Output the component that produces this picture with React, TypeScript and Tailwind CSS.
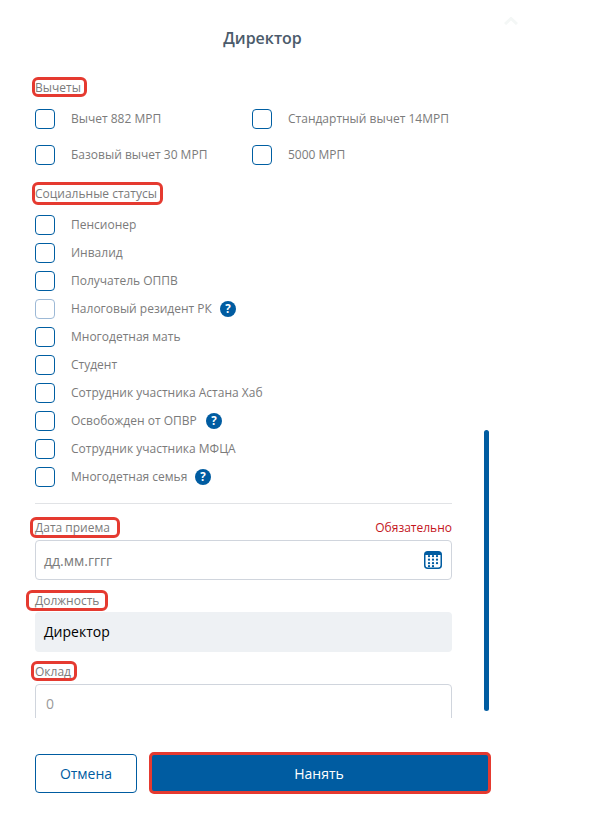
import React from "react";

const Box = ({ faded }: { faded?: boolean }) => (
  <span className={`block w-5 h-5 shrink-0 rounded-[4px] border-[1.5px] bg-white ${faded ? "border-[#9db9d6]" : "border-[#005ea2]"}`} />
);

const Help = () => (
  <svg width="16" height="16" viewBox="0 0 16 16" className="block shrink-0">
    <circle cx="8" cy="8" r="8" fill="#005ca1" />
    <text x="8" y="12" textAnchor="middle" fontSize="11.5" fontWeight="700" fill="#fff" fontFamily="'Open Sans', sans-serif">?</text>
  </svg>
);

const Check = ({ label, help, faded, gap = "ml-[8px]" }: { label: string; help?: boolean; faded?: boolean; gap?: string }) => (
  <div className="flex items-center h-5">
    <Box faded={faded} />
    <span className="ml-4 text-[12px] leading-5 text-[#7b7b7b] whitespace-nowrap">{label}</span>
    {help && <span className={gap}><Help /></span>}
  </div>
);

const Marked = ({ children, className }: { children: React.ReactNode; className: string }) => (
  <span className={`block w-fit text-[12px] text-[#7b7b7b] rounded-[3px] outline-[3px] outline-[#e53a30] ${className}`}>{children}</span>
);

const CalendarIcon = () => (
  <svg width="18" height="18" viewBox="0 0 18 18" className="shrink-0">
    <rect x="0.75" y="0.75" width="16.5" height="16.5" rx="3" fill="#fff" stroke="#005ca1" strokeWidth="1.5" />
    <rect x="1" y="1" width="16" height="3" fill="#005ca1" />
    {[4, 7.5, 11, 14].flatMap((y, r) =>
      (r === 3 ? [5, 9] : [5, 9, 13]).map((x) => <circle key={`${x}-${y}`} cx={x} cy={y + 1.2} r="1.15" fill="#005ca1" />)
    )}
  </svg>
);

export default function App() {
  return (
    <div className="relative w-[614px] h-[814px] bg-white overflow-hidden" style={{ fontFamily: "'Open Sans', 'Noto Sans', sans-serif" }}>
      <svg width="14" height="8" viewBox="0 0 14 8" className="absolute left-[504px] top-[17px]">
        <path d="M1 7 L7 1.5 L13 7" fill="none" stroke="#f4f7f6" strokeWidth="3" />
      </svg>

      <div className="w-[455px] ml-[35px] flex flex-col">
        <h1 className="h-[77px] pt-[27px] text-center text-[16px] leading-[22px] font-semibold text-[#4b5b6b]">Директор</h1>

        <div className="relative h-[641px] overflow-hidden -ml-[10px] pl-[10px]">
          <div className="w-[417px] pt-[3px]">
            <div className="h-[29px]"><Marked className="pt-[1px] leading-[13px] pr-[3px]">Вычеты</Marked></div>
            <div className="grid grid-cols-[217px_1fr] gap-y-4">
              <Check label="Вычет 882 МРП" />
              <Check label="Стандартный вычет 14МРП" />
              <Check label="Базовый вычет 30 МРП" />
              <Check label="5000 МРП" />
            </div>
            <div className="h-[50px] pt-[20px]"><Marked className="leading-[17px] pr-[3px]">Социальные статусы</Marked></div>
            <div className="flex flex-col gap-2">
              <Check label="Пенсионер" />
              <Check label="Инвалид" />
              <Check label="Получатель ОППВ" />
              <Check label="Налоговый резидент РК" help faded />
              <Check label="Многодетная мать" />
              <Check label="Студент" />
              <Check label="Сотрудник участника Астана Хаб" />
              <Check label="Освобожден от ОПВР" help gap="ml-[9px]" />
              <Check label="Сотрудник участника МФЦА" />
              <Check label="Многодетная семья" help />
            </div>
            <div className="mt-4 border-t border-[#e1e3e6]" />
            <div className="mt-[16px] h-[20px] flex items-start justify-between">
              <Marked className="leading-[15px] -ml-[2px] pl-[2px] pr-[7px]">Дата приема</Marked>
              <span className="text-[12px] leading-[15px] text-[#c4151c]">Обязательно</span>
            </div>
            <div className="h-10 rounded-[4px] border border-[#d0d5dd] pl-[8px] pr-[9px] flex items-center justify-between">
              <span className="text-[14px] text-[#7b7b7b]">дд.мм.гггг</span>
              <CalendarIcon />
            </div>
            <div className="mt-[13px] h-[19px]"><Marked className="leading-[15px] -ml-[6px] pl-[6px] pr-[6px]">Должность</Marked></div>
            <div className="h-10 rounded-[4px] bg-[#eef1f4] px-[9px] pb-[1px] flex items-center text-[14px] text-black">Директор</div>
            <div className="mt-[12px] h-[20px]"><Marked className="pt-[1px] leading-[13px] -ml-[1px] pl-[1px] pr-[3px]">Оклад</Marked></div>
            <div className="h-10 rounded-[4px] border border-[#d0d5dd] px-[10px] pb-[1px] flex items-center text-[14px] text-[#9a9a9a]">0</div>
          </div>
          <div className="absolute right-[1px] top-[353px] w-[5px] h-[281px] rounded-full bg-[#005ca1]" />
        </div>

        <div className="mt-[36px] flex items-start gap-[12px]">
          <button className="w-[102px] h-[39px] rounded-[4px] border border-[#005ca1] bg-white text-[14px] text-[#005ca1]">Отмена</button>
          <button className="flex-1 -mr-[1px] -mt-[2px] h-[42px] pt-[1px] pr-[2px] rounded-[5px] border-[3px] border-[#e53a30] bg-[#005ca1] text-[14px] text-white">Нанять</button>
        </div>
      </div>
    </div>
  );
}
